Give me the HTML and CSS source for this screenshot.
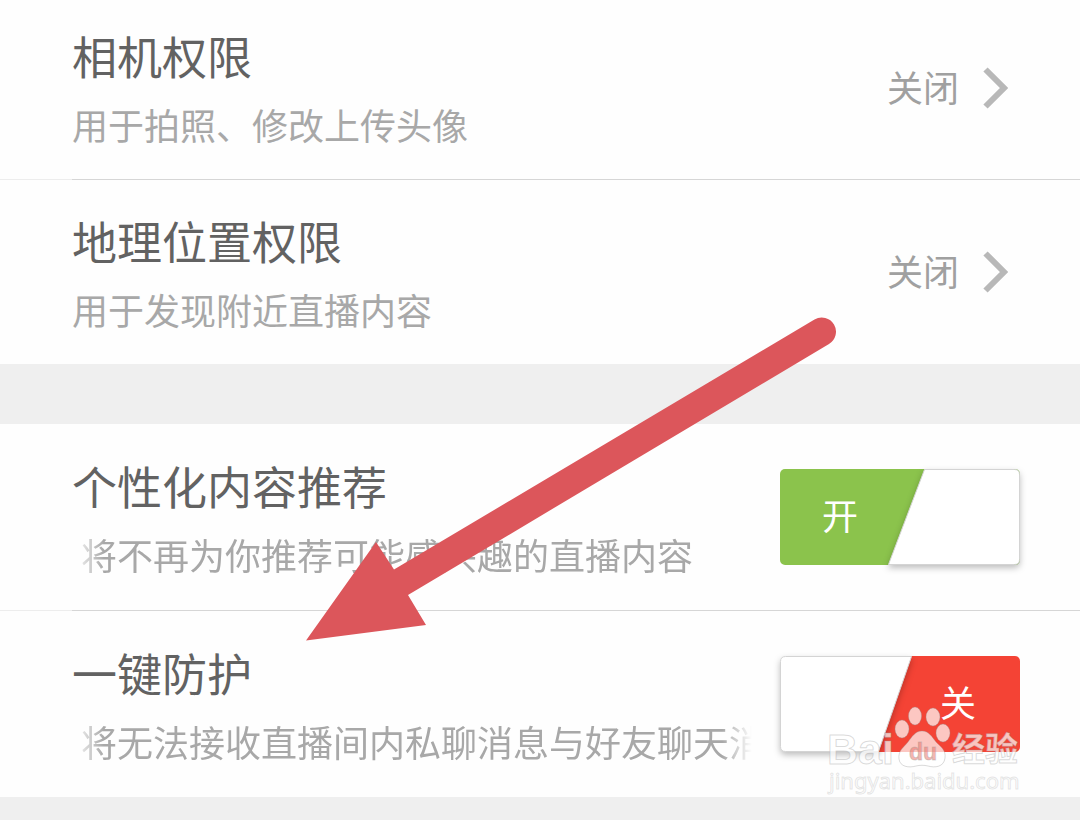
FILE: index.html
```html
<!DOCTYPE html>
<html lang="zh-CN">
<head>
<meta charset="utf-8">
<meta name="viewport" content="width=device-width, initial-scale=1">
<title>隐私设置</title>
<link rel="stylesheet" href="styles.css">
</head>
<body>
<main class="settings">
  <section class="group">
    <a class="row row-first" href="#camera">
      <span class="copy">
        <span class="title">相机权限</span>
        <span class="desc">用于拍照、修改上传头像</span>
      </span>
      <span class="value">
        <span class="value-text">关闭</span>
        <svg class="chevron" viewBox="0 0 25 42" aria-hidden="true"><path d="M2.500 2.500L21 21L2.500 39.500"/></svg>
      </span>
    </a>
    <a class="row" href="#location">
      <span class="copy">
        <span class="title">地理位置权限</span>
        <span class="desc">用于发现附近直播内容</span>
      </span>
      <span class="value">
        <span class="value-text">关闭</span>
        <svg class="chevron" viewBox="0 0 25 42" aria-hidden="true"><path d="M2.500 2.500L21 21L2.500 39.500"/></svg>
      </span>
    </a>
  </section>

  <section class="group">
    <div class="row row-switch">
      <label class="copy" for="recommend">
        <span class="title">个性化内容推荐</span>
        <span class="desc marquee">将不再为你推荐可能感兴趣的直播内容</span>
      </label>
      <span class="switch switch-on">
        <input class="switch-input" type="checkbox" id="recommend" checked>
        <span class="switch-fill"><span class="switch-text">开</span></span>
        <svg class="switch-knob" viewBox="0 0 240 96" aria-hidden="true"><path d="M144.500 .5H234.500Q239.500 .5 239.500 5.500V90.500Q239.500 95.500 234.500 95.500H108.500Z"/></svg>
      </span>
    </div>
    <div class="row row-switch">
      <label class="copy" for="protect">
        <span class="title">一键防护</span>
        <span class="desc marquee">将无法接收直播间内私聊消息与好友聊天消</span>
      </label>
      <span class="switch switch-off">
        <input class="switch-input" type="checkbox" id="protect">
        <span class="switch-fill"><span class="switch-text">关</span></span>
        <svg class="switch-knob" viewBox="0 0 240 96" aria-hidden="true"><path d="M131.500 .5H5.500Q.5 .5 .5 5.500V90.500Q.5 95.500 5.500 95.500H98.500Z"/></svg>
      </span>
    </div>
  </section>

  <svg class="arrow" viewBox="0 0 532 326" aria-hidden="true">
    <path d="M1 324.500L71 226L89 253.500L509.500 3.500A14 14 0 0 1 524 28L103 279L121 309Z"/>
  </svg>

  <svg class="watermark" viewBox="0 0 200 96" role="img" aria-label="Baidu 经验">
    <text class="mark-latin" x="2" y="63">Bai</text>
    <g>
      <ellipse cx="77" cy="28" rx="7" ry="9"/>
      <ellipse cx="90" cy="15" rx="6.500" ry="9"/>
      <ellipse cx="108" cy="16" rx="7" ry="9"/>
      <ellipse cx="118" cy="32" rx="7" ry="9"/>
      <path d="M97 30C104 30 107 36 111 41C116 46 121 49 120 57C119 66 110 67 103 65C99 64 95 64 91 65C84 67 75 66 74 58C73 50 78 47 83 41C87 36 90 30 97 30Z"/>
    </g>
    <text class="mark-du" x="84" y="59">du</text>
    <text class="mark-cjk" x="127" y="60">经验</text>
    <text class="mark-url" x="4" y="88">jingyan.baidu.com</text>
  </svg>
</main>
</body>
</html>
```
FILE: styles.css
```css
* { box-sizing: border-box; }

body {
  margin: 0;
  min-height: 100vh;
  background: #efefef;
  font-family: "Noto Sans CJK SC", sans-serif;
}

.settings { position: relative; overflow: hidden; }

.group {
  display: flex;
  flex-direction: column;
  margin-bottom: 60px;
  background: #fefefe;
}
.group:last-of-type { margin-bottom: 0; }

.row {
  display: flex;
  align-items: center;
  justify-content: space-between;
  gap: 28px;
  padding: 0 72px;
  color: inherit;
  text-decoration: none;
}
.row-switch { padding-right: 60px; }
.row:not(:last-child) {
  padding-bottom: 1px;
  background: linear-gradient(90deg, #ededed 72px, #d6d6d6 72px) bottom / 100% 1px no-repeat;
}

.copy {
  display: flex;
  flex-direction: column;
  gap: 11px;
  min-width: 0;
  padding: 31px 0 28px;
}
.row-first .copy { padding: 26px 0 28px; }
.row-switch .copy { flex: 1; padding: 32px 0 29px; }

.title { font-size: 45px; line-height: 60px; color: #626262; }
.desc { font-size: 36px; line-height: 54px; color: #a8a8a8; white-space: nowrap; }

.marquee {
  overflow: hidden;
  padding-left: 9px;
  -webkit-mask-image: linear-gradient(90deg, transparent, #000 32px, #000 calc(100% - 30px), transparent);
  mask-image: linear-gradient(90deg, transparent, #000 32px, #000 calc(100% - 30px), transparent);
}

.value {
  display: flex;
  align-items: center;
  gap: 24px;
  font-size: 36px;
  line-height: 54px;
  color: #a0a0a0;
}
.row-first .value { padding-bottom: 4px; }
.value-text { padding-bottom: 4px; }
.chevron { width: 25px; height: 42px; fill: none; stroke: #b8b8b8; stroke-width: 6; }

.switch { position: relative; flex: none; display: flex; width: 240px; height: 96px; }
.switch-input { position: absolute; inset: 0; width: 100%; height: 100%; margin: 0; opacity: 0; z-index: 2; cursor: pointer; }
.switch-fill { display: flex; align-items: center; width: 100%; border-radius: 5px; }
.switch-on .switch-fill { padding-left: 42px; background: #8bc34c; }
.switch-off .switch-fill { justify-content: flex-end; padding-right: 44px; background: linear-gradient(100deg, #fff 30%, #f44335 30%); }
.switch-text { padding-bottom: 7px; font-size: 36px; line-height: 54px; color: #fff; }
.switch-knob {
  position: absolute;
  inset: 0;
  overflow: visible;
  fill: #fff;
  stroke: #d4d4d4;
  stroke-width: 1;
  filter: drop-shadow(0 3px 3px rgba(0, 0, 0, .25));
}

.arrow { position: absolute; left: 305px; top: 316px; width: 532px; height: 326px; fill: #dc565b; pointer-events: none; }

.watermark {
  position: absolute;
  right: 55px;
  bottom: 0;
  width: 200px;
  height: 96px;
  fill: rgba(255, 255, 255, .7);
  stroke: rgba(150, 150, 150, .35);
  stroke-width: 1;
  pointer-events: none;
}
.mark-latin { font: 700 43px "Liberation Sans", sans-serif; }
.mark-du { font: 700 23px "Liberation Sans", sans-serif; fill: rgba(235, 110, 100, .5); }
.mark-cjk { font: 700 33px "Noto Sans CJK SC", sans-serif; }
.mark-url { font: 400 22px "Noto Sans", sans-serif; stroke: rgba(150, 150, 150, .25); }
```
